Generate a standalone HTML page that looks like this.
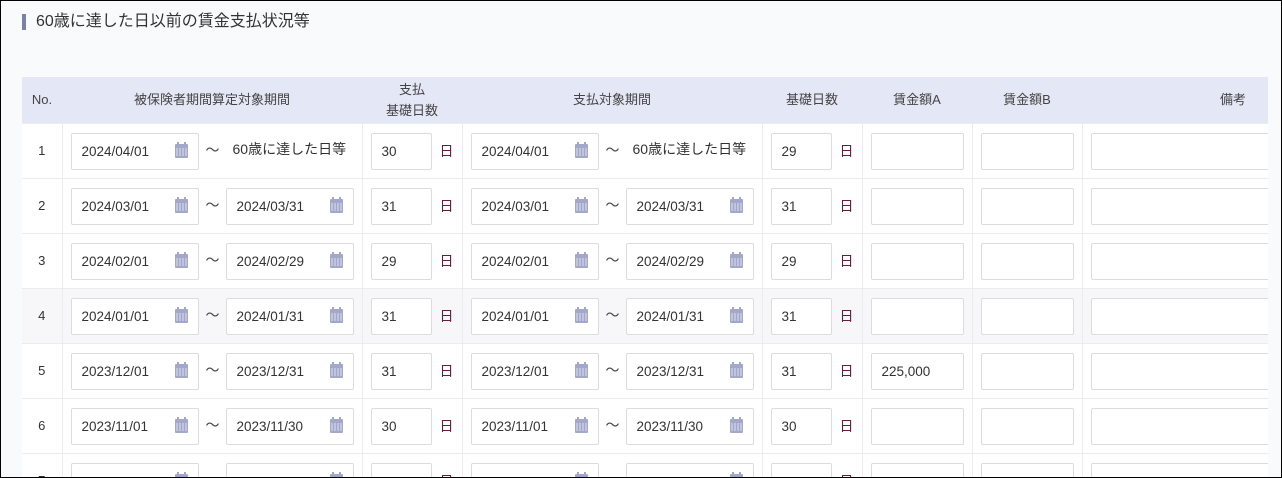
<!DOCTYPE html>
<html><head><meta charset="utf-8"><style>
*{box-sizing:border-box;margin:0;padding:0}
html,body{width:1282px;height:478px;overflow:hidden;background:#fff}
#f{position:absolute;left:0;top:0;width:1282px;height:478px;border:1px solid #000;background:#f9fafc;overflow:hidden;font-family:"Liberation Sans","Noto Sans CJK JP",sans-serif;color:#333}
.ttl{position:absolute;left:21px;top:13px;height:16px;border-left:4px solid #7c80a8;padding-left:10px;font-size:16px;line-height:16px;color:#333}
table{position:absolute;left:21px;top:76px;border-collapse:collapse;table-layout:fixed;width:1246px}
th{background:#e4e8f6;height:46px;font-weight:normal;font-size:13px;color:#444;line-height:21px}
td{height:55px;border-top:1px solid #ececef;border-left:1px solid #ececef;background:#fff;position:relative;font-size:13px;overflow:hidden}
td:first-child{border-left:none;text-align:center}
tr.h td{background:#f7f7f9}
.i{position:absolute;top:9px;height:37px;border:1px solid #dcdcdf;border-radius:2px;background:#fff;font-size:13.5px;line-height:35px;padding-left:10px;color:#333}
.d{width:128px}
.c{position:absolute;right:10px;top:10px;width:13px;height:14px;background:#a3a8cb;border-radius:1px}
.c:before{content:"";position:absolute;left:2px;top:-2px;width:2px;height:3px;background:#a3a8cb;box-shadow:7px 0 0 #a3a8cb}
.c:after{content:"";position:absolute;left:1px;top:4px;width:11px;height:8px;background:repeating-linear-gradient(90deg,#c9cce2 0 2px,transparent 2px 3px),#a3a8cb;opacity:.8}
.t{position:absolute;left:143px;top:16px;font-size:14px;color:#444}
.n{position:absolute;top:16px;font-size:14px;color:#333}
.ni{left:8px;width:61px}
.u{position:absolute;left:77px;top:17px;font-size:14px;color:#6a1b3c}
</style></head><body><div id="f">
<div class="ttl">60歳に達した日以前の賃金支払状況等</div>
<table>
<colgroup><col style="width:40px"><col style="width:300px"><col style="width:100px"><col style="width:300px"><col style="width:100px"><col style="width:110px"><col style="width:110px"><col style="width:186px"></colgroup>
<tr><th>No.</th><th>被保険者期間算定対象期間</th><th>支払<br>基礎日数</th><th>支払対象期間</th><th>基礎日数</th><th>賃金額A</th><th>賃金額B</th><th style="text-align:right;padding-right:22px">備考</th></tr>
<tr><td>1</td><td><div class="i d" style="left:8px">2024/04/01<span class="c"></span></div><span class="t">～</span><span class="n" style="left:170px;top:15px">60歳に達した日等</span></td><td><div class="i ni">30</div><span class="u">日</span></td><td><div class="i d" style="left:8px">2024/04/01<span class="c"></span></div><span class="t">～</span><span class="n" style="left:170px;top:15px">60歳に達した日等</span></td><td><div class="i ni">29</div><span class="u">日</span></td><td><div class="i" style="left:8px;width:93px"></div></td><td><div class="i" style="left:8px;width:93px"></div></td><td><div class="i" style="left:8px;width:200px"></div></td></tr>
<tr><td>2</td><td><div class="i d" style="left:8px">2024/03/01<span class="c"></span></div><span class="t">～</span><div class="i d" style="left:163px">2024/03/31<span class="c"></span></div></td><td><div class="i ni">31</div><span class="u">日</span></td><td><div class="i d" style="left:8px">2024/03/01<span class="c"></span></div><span class="t">～</span><div class="i d" style="left:163px">2024/03/31<span class="c"></span></div></td><td><div class="i ni">31</div><span class="u">日</span></td><td><div class="i" style="left:8px;width:93px"></div></td><td><div class="i" style="left:8px;width:93px"></div></td><td><div class="i" style="left:8px;width:200px"></div></td></tr>
<tr><td>3</td><td><div class="i d" style="left:8px">2024/02/01<span class="c"></span></div><span class="t">～</span><div class="i d" style="left:163px">2024/02/29<span class="c"></span></div></td><td><div class="i ni">29</div><span class="u">日</span></td><td><div class="i d" style="left:8px">2024/02/01<span class="c"></span></div><span class="t">～</span><div class="i d" style="left:163px">2024/02/29<span class="c"></span></div></td><td><div class="i ni">29</div><span class="u">日</span></td><td><div class="i" style="left:8px;width:93px"></div></td><td><div class="i" style="left:8px;width:93px"></div></td><td><div class="i" style="left:8px;width:200px"></div></td></tr>
<tr class="h"><td>4</td><td><div class="i d" style="left:8px">2024/01/01<span class="c"></span></div><span class="t">～</span><div class="i d" style="left:163px">2024/01/31<span class="c"></span></div></td><td><div class="i ni">31</div><span class="u">日</span></td><td><div class="i d" style="left:8px">2024/01/01<span class="c"></span></div><span class="t">～</span><div class="i d" style="left:163px">2024/01/31<span class="c"></span></div></td><td><div class="i ni">31</div><span class="u">日</span></td><td><div class="i" style="left:8px;width:93px"></div></td><td><div class="i" style="left:8px;width:93px"></div></td><td><div class="i" style="left:8px;width:200px"></div></td></tr>
<tr><td>5</td><td><div class="i d" style="left:8px">2023/12/01<span class="c"></span></div><span class="t">～</span><div class="i d" style="left:163px">2023/12/31<span class="c"></span></div></td><td><div class="i ni">31</div><span class="u">日</span></td><td><div class="i d" style="left:8px">2023/12/01<span class="c"></span></div><span class="t">～</span><div class="i d" style="left:163px">2023/12/31<span class="c"></span></div></td><td><div class="i ni">31</div><span class="u">日</span></td><td><div class="i" style="left:8px;width:93px">225,000</div></td><td><div class="i" style="left:8px;width:93px"></div></td><td><div class="i" style="left:8px;width:200px"></div></td></tr>
<tr><td>6</td><td><div class="i d" style="left:8px">2023/11/01<span class="c"></span></div><span class="t">～</span><div class="i d" style="left:163px">2023/11/30<span class="c"></span></div></td><td><div class="i ni">30</div><span class="u">日</span></td><td><div class="i d" style="left:8px">2023/11/01<span class="c"></span></div><span class="t">～</span><div class="i d" style="left:163px">2023/11/30<span class="c"></span></div></td><td><div class="i ni">30</div><span class="u">日</span></td><td><div class="i" style="left:8px;width:93px"></div></td><td><div class="i" style="left:8px;width:93px"></div></td><td><div class="i" style="left:8px;width:200px"></div></td></tr>
<tr><td>7</td><td><div class="i d" style="left:8px">&nbsp;<span class="c"></span></div><span class="t">～</span><div class="i d" style="left:163px">&nbsp;<span class="c"></span></div></td><td><div class="i ni"></div><span class="u">日</span></td><td><div class="i d" style="left:8px">&nbsp;<span class="c"></span></div><span class="t">～</span><div class="i d" style="left:163px">&nbsp;<span class="c"></span></div></td><td><div class="i ni"></div><span class="u">日</span></td><td><div class="i" style="left:8px;width:93px"></div></td><td><div class="i" style="left:8px;width:93px"></div></td><td><div class="i" style="left:8px;width:200px"></div></td></tr>
</table>
</div></body></html>
